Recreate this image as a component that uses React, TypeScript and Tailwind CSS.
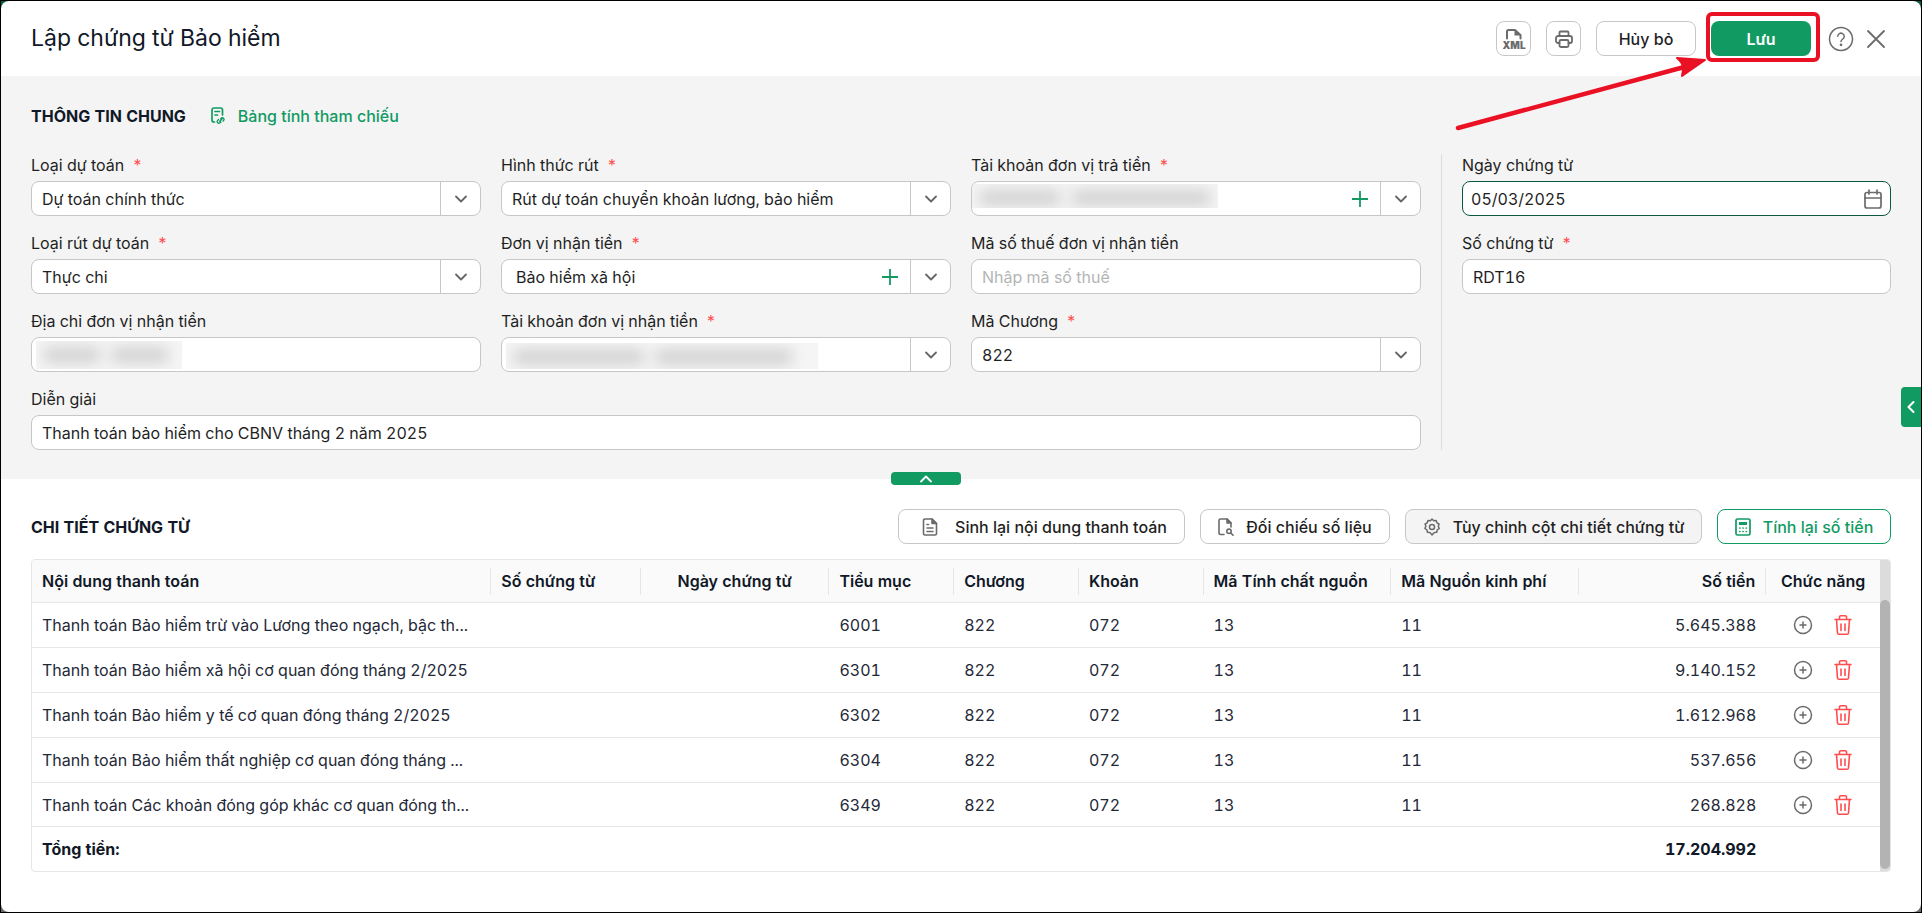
import React from 'react'
import { ChevronDown, ChevronLeft, ChevronUp } from 'lucide-react'

type IconProps = { className?: string }

const stroke = {
  fill: 'none',
  stroke: 'currentColor',
  strokeLinecap: 'round' as const,
  strokeLinejoin: 'round' as const,
}

function XmlIcon() {
  return (
    <svg width="24" height="22" viewBox="0 0 24 22" className="text-[#6b6b6b]" aria-hidden="true">
      <path d="M5 10.5V3.5A1.5 1.5 0 0 1 6.5 2H13l5.5 5v3.5" {...stroke} strokeWidth="2" />
      <path d="M12.5 2v5.5h6z" fill="currentColor" />
      <text x="12" y="20.5" textAnchor="middle" fontSize="10" fontWeight="900" fill="currentColor">
        XML
      </text>
    </svg>
  )
}

function PrinterIcon() {
  return (
    <svg width="20" height="20" viewBox="0 0 20 20" className="text-[#6b6b6b]" {...stroke} strokeWidth="1.8" aria-hidden="true">
      <path d="M5.5 7V3.5a1 1 0 0 1 1-1h7a1 1 0 0 1 1 1V7" />
      <path d="M5.5 14H4a2 2 0 0 1-2-2V9a2 2 0 0 1 2-2h12a2 2 0 0 1 2 2v3a2 2 0 0 1-2 2h-1.5" />
      <rect x="5.5" y="11" width="9" height="7" rx="1.5" />
    </svg>
  )
}

function HelpIcon() {
  return (
    <svg width="26" height="26" viewBox="0 0 26 26" {...stroke} strokeWidth="1.5" aria-hidden="true">
      <circle cx="13" cy="13" r="11.5" />
      <path d="M9.8 10.3a3.2 3.2 0 1 1 5 2.7c-1.1.8-1.8 1.3-1.8 2.6" />
      <circle cx="13" cy="18.8" r=".6" fill="currentColor" />
    </svg>
  )
}

function CloseIcon() {
  return (
    <svg width="20" height="20" viewBox="0 0 20 20" {...stroke} strokeWidth="1.8" aria-hidden="true">
      <path d="M2 2l16 16M18 2L2 18" />
    </svg>
  )
}

function SheetLinkIcon() {
  return (
    <svg width="16" height="18" viewBox="0 0 16 18" {...stroke} strokeWidth="1.7" aria-hidden="true">
      <path d="M4.5 15H4a2 2 0 0 1-2-2V3a2 2 0 0 1 2-2h6.5a2 2 0 0 1 2 2v5" />
      <path d="M5 4.5h4.500M5 8h2.500" />
      <path d="M8.500 12.500l-.9.9a1.700 1.700 0 0 0 2.400 2.400l.9-.9M10.700 11.700l.5-.5a1.700 1.700 0 0 1 2.400 2.400l-.5.5M9.700 14.200l2.300-2.300" strokeWidth="1.4" />
    </svg>
  )
}

function CalendarIcon() {
  return (
    <svg width="18" height="20" viewBox="0 0 18 20" {...stroke} strokeWidth="1.7" aria-hidden="true">
      <rect x="1" y="3.5" width="16" height="15.5" rx="2" />
      <path d="M1 9h16M5 1v4M13 1v4" />
    </svg>
  )
}

function PlusIcon() {
  return (
    <svg width="18" height="18" viewBox="0 0 18 18" aria-hidden="true">
      <path d="M9 1v16M1 9h16" stroke="currentColor" strokeWidth="1.8" />
    </svg>
  )
}

function DocumentIcon() {
  return (
    <svg width="16" height="18" viewBox="0 0 16 18" className="text-[#6b6b6b]" {...stroke} strokeWidth="1.6" aria-hidden="true">
      <path d="M10 1H3a1.5 1.5 0 0 0-1.5 1.5v13A1.5 1.5 0 0 0 3 17h10a1.5 1.5 0 0 0 1.5-1.5V5.500z" />
      <path d="M10 1v4.500h4.500z" fill="currentColor" />
      <path d="M5 6.500h1.500M5 10h6M5 13.500h6" />
    </svg>
  )
}

function DocumentSearchIcon() {
  return (
    <svg width="16" height="18" viewBox="0 0 16 18" className="text-[#6b6b6b]" {...stroke} strokeWidth="1.6" aria-hidden="true">
      <path d="M6 16.500H2.500A1.500 1.500 0 0 1 1 15V2.500A1.500 1.500 0 0 1 2.500 1H9l4 4v4" />
      <path d="M9 1v4h4z" fill="currentColor" />
      <circle cx="11" cy="13.300" r="2.200" />
      <path d="M12.700 15l2.300 2.200" />
    </svg>
  )
}

function GearIcon() {
  return (
    <svg width="18" height="18" viewBox="0 0 24 24" className="text-[#6b6b6b]" {...stroke} strokeWidth="2" aria-hidden="true">
      <path d="M12 1.500l2.400 2.200 3.200-.4 1 3.100 2.800 1.600-1 3.100 1.300 2.900-2.700 1.800-.7 3.200-3.200.2L12 22.500l-2.900-3.300-3.200-.2-.7-3.200L2.500 14l1.300-2.900-1-3.100 2.800-1.600 1-3.100 3.200.4z" />
      <circle cx="12" cy="12" r="3.400" />
    </svg>
  )
}

function CalculatorIcon() {
  return (
    <svg width="16" height="18" viewBox="0 0 16 18" {...stroke} strokeWidth="1.7" aria-hidden="true">
      <rect x="1" y="1" width="14" height="16" rx="1.5" />
      <rect x="4" y="4" width="8" height="3" fill="currentColor" strokeWidth="0" />
      <path d="M4.800 10h.1M8 10h.1M11.200 10h.1M4.800 13.500h.1M8 13.500h.1M11.200 13.500h.1" />
    </svg>
  )
}

function AddRowIcon({ className }: IconProps) {
  return (
    <svg width="20" height="20" viewBox="0 0 20 20" className={className} {...stroke} strokeWidth="1.5" aria-hidden="true">
      <circle cx="10" cy="10" r="8.5" />
      <path d="M10 7v6M7 10h6" />
    </svg>
  )
}

function TrashIcon({ className }: IconProps) {
  return (
    <svg width="20" height="22" viewBox="0 0 20 22" className={className} {...stroke} strokeWidth="1.6" aria-hidden="true">
      <path d="M2 5.500h16M6.500 5.500V3a1.300 1.300 0 0 1 1.300-1.300h4.400A1.300 1.300 0 0 1 13.500 3v2.500" />
      <path d="M3.500 5.500l1 13.500a1.500 1.500 0 0 0 1.500 1.300h8a1.500 1.500 0 0 0 1.500-1.300l1-13.500" />
      <path d="M8 10v6.500M12 10v6.500" />
    </svg>
  )
}

function Label({ id, text, required }: { id: string; text: string; required?: boolean }) {
  return (
    <label htmlFor={id} className="h-[27px] leading-[22px] whitespace-nowrap">
      {text}
      {required && <span className="ml-2 text-[#ff4d4f]">*</span>}
    </label>
  )
}

// Hidden personal data is covered by soft grey patches
function Redacted({ className, patches }: { className: string; patches: string[] }) {
  return (
    <span className={`pointer-events-none absolute flex gap-3 overflow-hidden bg-[#f5f5f5] px-2 pt-1.5 ${className}`}>
      {patches.map((patch, i) => (
        <span key={i} className={`h-4 bg-[#d3d3d3] blur-[7px] ${patch}`} />
      ))}
    </span>
  )
}

type SelectFieldProps = {
  id: string
  label: string
  value: string
  addable?: boolean
  indent?: boolean
  children?: React.ReactNode
}

function SelectField({ id, label, value, addable, indent, children }: SelectFieldProps) {
  return (
    <div className="flex flex-col">
      <Label id={id} text={label} required />
      <div className="relative flex h-[35px] overflow-hidden rounded-lg border border-[#c7c7c7] bg-white">
        <select
          id={id}
          className={`min-w-0 flex-1 appearance-none bg-transparent outline-none ${indent ? 'pl-3.5' : 'pl-2.5'}`}
        >
          <option>{value}</option>
        </select>
        {children}
        {addable && (
          <button type="button" aria-label={`Thêm ${label}`} className="flex w-10 items-center justify-center text-[#119b63]">
            <PlusIcon />
          </button>
        )}
        <button
          type="button"
          aria-label={`Mở danh sách ${label}`}
          className="flex w-10 items-center justify-center border-l border-[#c7c7c7] text-[#666]"
        >
          <ChevronDown size={20} strokeWidth={2.2} />
        </button>
      </div>
    </div>
  )
}

const inputClass =
  'h-[35px] w-full rounded-lg border border-[#c7c7c7] bg-white px-2.5 outline-none placeholder:text-[#b5b5b5]'

const rows = [
  { content: 'Thanh toán Bảo hiểm trừ vào Lương theo ngạch, bậc th...', item: '6001', amount: '5.645.388' },
  { content: 'Thanh toán Bảo hiểm xã hội cơ quan đóng tháng 2/2025', item: '6301', amount: '9.140.152' },
  { content: 'Thanh toán Bảo hiểm y tế cơ quan đóng tháng 2/2025', item: '6302', amount: '1.612.968' },
  { content: 'Thanh toán Bảo hiểm thất nghiệp cơ quan đóng tháng ...', item: '6304', amount: '537.656' },
  { content: 'Thanh toán Các khoản đóng góp khác cơ quan đóng th...', item: '6349', amount: '268.828' },
]

const columns = [
  { title: 'Nội dung thanh toán', width: 'w-[24.85%]', align: 'text-left' },
  { title: 'Số chứng từ', width: 'w-[8.1%]', align: 'text-left' },
  { title: 'Ngày chứng từ', width: 'w-[10.2%]', align: 'text-center' },
  { title: 'Tiểu mục', width: 'w-[6.75%]', align: 'text-left' },
  { title: 'Chương', width: 'w-[6.75%]', align: 'text-left' },
  { title: 'Khoản', width: 'w-[6.75%]', align: 'text-left' },
  { title: 'Mã Tính chất nguồn', width: 'w-[10.15%]', align: 'text-left' },
  { title: 'Mã Nguồn kinh phí', width: 'w-[10.15%]', align: 'text-left' },
  { title: 'Số tiền', width: 'w-[10.15%]', align: 'text-right' },
  { title: 'Chức năng', width: 'w-[6.15%]', align: 'text-center' },
]

function Header() {
  return (
    <header className="flex h-[75px] items-center justify-between pr-[35px] pl-[30px]">
      <h1 className="text-[23px] text-[#111827]">Lập chứng từ Bảo hiểm</h1>
      <div className="flex items-center gap-[15px] text-[#1f1f1f]">
        <button type="button" aria-label="Xuất XML" className="flex size-[35px] items-center justify-center rounded-lg border border-[#c7c7c7]">
          <XmlIcon />
        </button>
        <button type="button" aria-label="In" className="flex size-[35px] items-center justify-center rounded-lg border border-[#c7c7c7]">
          <PrinterIcon />
        </button>
        <button type="button" className="h-[35px] w-[100px] rounded-lg border border-[#c7c7c7] font-medium">
          Hủy bỏ
        </button>
        <div className="relative">
          <button type="button" className="block h-[35px] w-[100px] rounded-lg bg-[#119b63] font-semibold text-white">
            Lưu
          </button>
          <span className="pointer-events-none absolute -top-[9px] -right-[9px] -bottom-[6px] -left-[5px] rounded-md border-4 border-[#ea1125]" />
          <svg width="256" height="80" viewBox="0 0 256 80" className="pointer-events-none absolute top-8 right-[101px] z-10" aria-hidden="true">
            <path d="M4 75L234 13" stroke="#ea1125" strokeWidth="4.5" strokeLinecap="round" />
            <path d="M251 7L223 5Q228 9 229 14Q229 18 228 23z" fill="#ea1125" stroke="#ea1125" strokeWidth="2" strokeLinejoin="round" />
          </svg>
        </div>
        <div className="ml-0.5 flex items-center gap-3 text-[#6b6b6b]">
          <button type="button" aria-label="Trợ giúp">
            <HelpIcon />
          </button>
          <button type="button" aria-label="Đóng">
            <CloseIcon />
          </button>
        </div>
      </div>
    </header>
  )
}

function GeneralInfo() {
  return (
    <section className="relative bg-[#f4f4f4] px-[30px] pt-7 pb-[29px]">
      <div className="flex h-6 items-center">
        <h2 className="font-bold text-[#111827]">THÔNG TIN CHUNG</h2>
        <a href="#" className="ml-6 flex items-center gap-3 font-medium text-[#119b63]">
          <SheetLinkIcon />
          Bảng tính tham chiếu
        </a>
      </div>

      <div className="mt-[26px] grid grid-cols-[1390fr_470fr] text-[#1f1f1f]">
        <div className="grid grid-cols-3 gap-x-5 gap-y-4">
          <SelectField id="loai-du-toan" label="Loại dự toán" value="Dự toán chính thức" />
          <SelectField id="hinh-thuc-rut" label="Hình thức rút" value="Rút dự toán chuyển khoản lương, bảo hiểm" />
          <SelectField id="tk-tra-tien" label="Tài khoản đơn vị trả tiền" value="" addable>
            <Redacted className="top-0.5 left-0 h-6 w-[246px]" patches={['w-[80px]', 'w-[138px]']} />
          </SelectField>

          <SelectField id="loai-rut" label="Loại rút dự toán" value="Thực chi" />
          <SelectField id="don-vi-nhan" label="Đơn vị nhận tiền" value="Bảo hiểm xã hội" addable indent />
          <div className="flex flex-col">
            <Label id="ma-so-thue" text="Mã số thuế đơn vị nhận tiền" />
            <input id="ma-so-thue" className={inputClass} placeholder="Nhập mã số thuế" />
          </div>

          <div className="relative flex flex-col">
            <Label id="dia-chi" text="Địa chỉ đơn vị nhận tiền" />
            <input id="dia-chi" className={inputClass} />
            <Redacted className="bottom-[3px] left-[5px] h-7 w-[146px]" patches={['w-[56px]', 'w-[56px]']} />
          </div>
          <SelectField id="tk-nhan-tien" label="Tài khoản đơn vị nhận tiền" value="">
            <Redacted className="top-[5px] left-1 h-[26px] w-[312px]" patches={['w-[130px]', 'w-[136px]']} />
          </SelectField>
          <SelectField id="ma-chuong" label="Mã Chương" value="822" />

          <div className="col-span-3 flex flex-col">
            <Label id="dien-giai" text="Diễn giải" />
            <input id="dien-giai" className={inputClass} defaultValue="Thanh toán bảo hiểm cho CBNV tháng 2 năm 2025" />
          </div>
        </div>

        <div className="ml-5 flex flex-col gap-4 border-l border-[#dcdcdc] pl-5">
          <div className="flex flex-col">
            <Label id="ngay-chung-tu" text="Ngày chứng từ" />
            <div className="flex h-[35px] items-center rounded-lg border border-[#0b5a3e] bg-white px-2">
              <input id="ngay-chung-tu" className="min-w-0 flex-1 bg-transparent outline-none" defaultValue="05/03/2025" />
              <button type="button" aria-label="Chọn ngày" className="text-[#6b6b6b]">
                <CalendarIcon />
              </button>
            </div>
          </div>
          <div className="flex flex-col">
            <Label id="so-chung-tu" text="Số chứng từ" required />
            <input id="so-chung-tu" className={inputClass} defaultValue="RDT16" />
          </div>
        </div>
      </div>

      <button
        type="button"
        aria-label="Thu gọn"
        className="absolute right-1/2 -bottom-1.5 flex h-[13px] w-[70px] items-center justify-center rounded bg-[#119b63] text-white"
      >
        <ChevronUp size={20} strokeWidth={2.2} />
      </button>
      <button
        type="button"
        aria-label="Mở bảng bên"
        className="absolute right-0 bottom-[52px] flex h-10 w-5 items-center justify-center rounded-l bg-[#119b63] text-white"
      >
        <ChevronLeft size={20} strokeWidth={2.5} />
      </button>
    </section>
  )
}

function DetailTable() {
  return (
    <div className="mt-[15px] flex overflow-hidden rounded border border-[#e6e6e6]">
      <div className="min-w-0 flex-1">
        <table className="w-full table-fixed border-separate border-spacing-0 text-[#1f2937]">
          <thead>
            <tr className="h-[43px] bg-[#fafafa] text-[#111827]">
              {columns.map((col, i) => (
                <th key={col.title} className={`border-b border-[#e6e6e6] p-0 font-semibold ${col.width} ${col.align}`}>
                  <div className={`h-[27px] truncate px-2.5 leading-[27px] ${i < columns.length - 1 ? 'border-r border-[#e6e6e6]' : ''}`}>
                    {col.title}
                  </div>
                </th>
              ))}
            </tr>
          </thead>
          <tbody>
            {rows.map((row) => (
              <tr key={row.item} className="h-[45px] last:h-11 *:border-b *:border-[#e6e6e6] *:px-2.5 *:py-0">
                <td>
                  <div className="truncate">{row.content}</div>
                </td>
                <td />
                <td />
                <td>{row.item}</td>
                <td>822</td>
                <td>072</td>
                <td>13</td>
                <td>11</td>
                <td className="text-right">{row.amount}</td>
                <td>
                  <div className="flex items-center justify-center gap-5">
                    <button type="button" aria-label="Thêm dòng">
                      <AddRowIcon className="text-[#6b6b6b]" />
                    </button>
                    <button type="button" aria-label="Xóa dòng">
                      <TrashIcon className="text-[#ff4d4f]" />
                    </button>
                  </div>
                </td>
              </tr>
            ))}
          </tbody>
          <tfoot>
            <tr className="h-11 font-bold text-[#111827]">
              <td colSpan={8} className="px-2.5">Tổng tiền:</td>
              <td className="px-2.5 text-right">17.204.992</td>
              <td />
            </tr>
          </tfoot>
        </table>
      </div>
      <div className="flex w-2.5 flex-col bg-[#dcdcdc] pt-10 pb-0.5">
        <div className="flex-1 rounded-full bg-[#b3b3b3]" />
      </div>
    </div>
  )
}

function Details() {
  const action = 'flex h-[35px] items-center justify-center rounded-lg border font-medium whitespace-nowrap'

  return (
    <section className="px-[30px] pt-[30px] pb-10">
      <div className="flex items-center justify-between">
        <h2 className="font-bold text-[#111827]">CHI TIẾT CHỨNG TỪ</h2>
        <div className="flex gap-[15px] text-[#1f1f1f]">
          <button type="button" className={`${action} w-[287px] gap-[17px] border-[#c7c7c7] pl-1.5`}>
            <DocumentIcon />
            Sinh lại nội dung thanh toán
          </button>
          <button type="button" className={`${action} w-[190px] gap-3 border-[#c7c7c7]`}>
            <DocumentSearchIcon />
            Đối chiếu số liệu
          </button>
          <button type="button" className={`${action} w-[297px] gap-3 border-[#c7c7c7] bg-[#f4f4f4]`}>
            <GearIcon />
            Tùy chỉnh cột chi tiết chứng từ
          </button>
          <button type="button" className={`${action} w-[174px] gap-3 border-[#119b63] text-[#119b63]`}>
            <CalculatorIcon />
            Tính lại số tiền
          </button>
        </div>
      </div>
      <DetailTable />
    </section>
  )
}

export default function App() {
  return (
    <div className="flex min-h-screen flex-col bg-black p-px font-['Inter',sans-serif] text-base tabular-nums">
      <div className="flex flex-1 flex-col bg-linear-to-b from-[#0b5a3e] to-[#6b6b6b]">
        <main className="flex-1 rounded-lg bg-white">
          <Header />
          <GeneralInfo />
          <Details />
        </main>
      </div>
    </div>
  )
}
